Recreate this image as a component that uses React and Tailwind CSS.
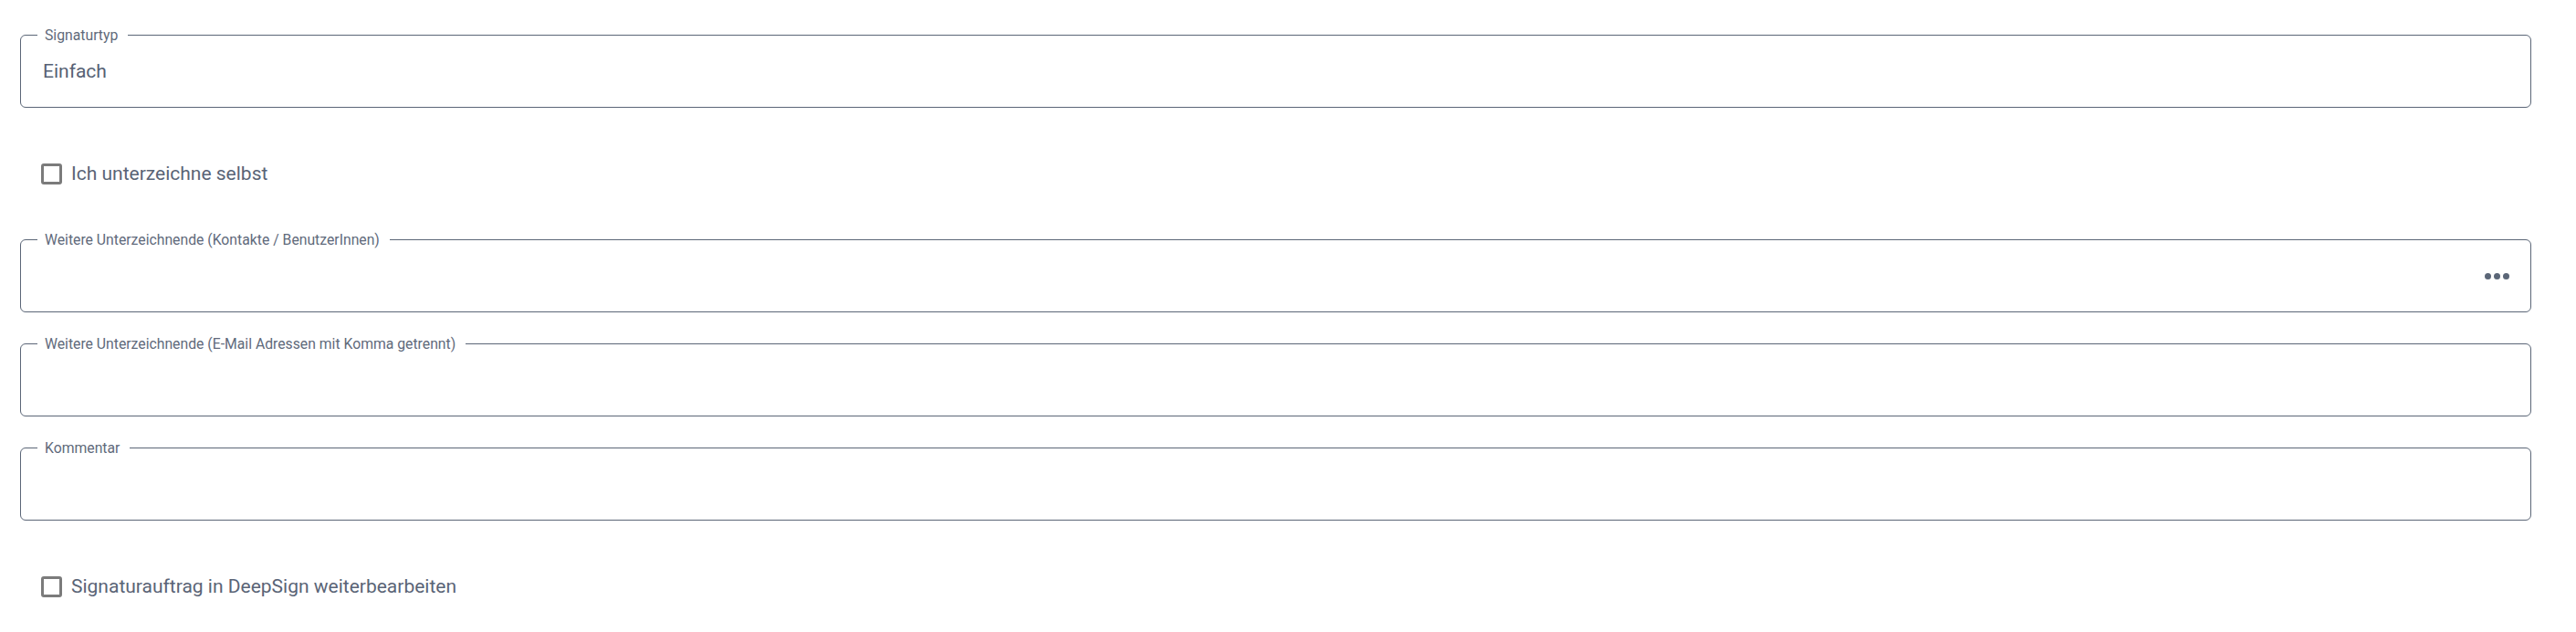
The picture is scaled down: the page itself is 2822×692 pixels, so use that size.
import React from "react";

function Field({ label, children, right }) {
  return (
    <div className="relative h-[80px] rounded-[6px] border border-[#5b6677] flex items-center pl-[24px] pr-[23px]">
      <span className="absolute left-[18px] top-[-9px] bg-white pl-[8px] pr-[11px] text-[15.75px] leading-[18px] text-[#5f6a7b]">
        {label}
      </span>
      <div className="flex-1 pt-[2px] text-[21px] text-[#566174]">{children}</div>
      {right}
    </div>
  );
}

function Check({ label }) {
  return (
    <div className="flex items-center h-[24px] pt-[1px] pl-[23px] gap-[10px]">
      <span className="w-[23px] h-[23px] rounded-[3px] border-[3px] border-[#7b7b7b] bg-white" />
      <span className="text-[21px] text-[#5a6476]">{label}</span>
    </div>
  );
}

export default function App() {
  return (
    <div
      className="w-full bg-white pt-[38px] pl-[22px] pr-[49px] pb-[40px] flex flex-col"
      style={{ fontFamily: "Roboto, 'Noto Sans', sans-serif" }}
    >
      <Field label="Signaturtyp">Einfach</Field>
      <div className="h-[60px]" />
      <Check label="Ich unterzeichne selbst" />
      <div className="h-[60px]" />
      <Field
        label="Weitere Unterzeichnende (Kontakte / BenutzerInnen)"
        right={
          <div className="flex gap-[3px]">
            <span className="w-[7px] h-[7px] rounded-full bg-[#5b6677]" />
            <span className="w-[7px] h-[7px] rounded-full bg-[#5b6677]" />
            <span className="w-[7px] h-[7px] rounded-full bg-[#5b6677]" />
          </div>
        }
      />
      <div className="h-[34px]" />
      <Field label="Weitere Unterzeichnende (E-Mail Adressen mit Komma getrennt)" />
      <div className="h-[34px]" />
      <Field label="Kommentar" />
      <div className="h-[60px]" />
      <Check label="Signaturauftrag in DeepSign weiterbearbeiten" />
    </div>
  );
}
